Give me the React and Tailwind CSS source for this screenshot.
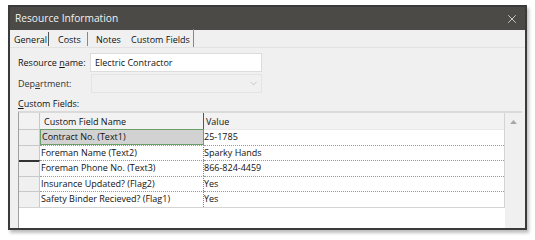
import { X, ChevronDown } from 'lucide-react';

const rows = [
  { name: 'Contract No. (Text1)', value: '25-1785', selected: true },
  { name: 'Foreman Name (Text2)', value: 'Sparky Hands' },
  { name: 'Foreman Phone No. (Text3)', value: '866-824-4459', mark: true },
  { name: 'Insurance Updated? (Flag2)', value: 'Yes' },
  { name: 'Safety Binder Recieved? (Flag1)', value: 'Yes' },
];

const App = () => {
  return (
    <div className="w-[535px] h-[240px] bg-white pt-[5px] pl-[8px] font-['Open_Sans','Noto_Sans',sans-serif] text-[9px] text-[#111] whitespace-nowrap">
      <div className="w-[519px] h-[225px] border-2 border-[#3a3a3a] bg-[#f0f0f0] flex flex-col shadow-[2px_3px_3px_rgba(0,0,0,0.25)]">
        {/* Title bar */}
        <div className="h-[23px] bg-[#4b4a47] flex items-center justify-between pl-[5px] pr-[6px] shrink-0">
          <span className="text-[10.2px] text-[#f2f2f2] leading-none">Resource Information</span>
          <X className="w-[14px] h-[14px] text-[#d8d8d8]" strokeWidth={1.5} />
        </div>

        {/* Tabs */}
        <div className="h-[18px] flex items-end border-b border-[#e2e2e2] shrink-0 leading-none">
          <div className="flex items-center h-[16px]">
            <span className="w-[38px] pl-[4px]">General</span>
            <span className="w-px h-[14px] bg-[#555]" />
            <span className="w-[38px] pl-[9px]">Costs</span>
            <span className="w-px h-[14px] bg-[#888]" />
            <span className="w-[43px] pl-[8px]">Notes</span>
            <span className="w-[62px]">Custom Fields</span>
            <span className="w-px h-[18px] bg-[#888] self-end" />
          </div>
        </div>

        {/* Form */}
        <div className="flex flex-col pl-[8px] pr-[3px] flex-1 min-h-0">
          <div className="flex items-center mt-[5px] h-[19px]">
            <span className="w-[72px]">Resource <span className="underline">n</span>ame:</span>
            <div className="w-[172px] h-[19px] bg-white border border-[#dcdcdc] flex items-center pl-[4px]">
              Electric Contractor
            </div>
          </div>
          <div className="flex items-center mt-[2px] h-[19px]">
            <span className="w-[73px] text-[#333]">Dep<span className="underline">a</span>rtment:</span>
            <div className="w-[171px] h-[19px] bg-[#f0f0f0] border border-[#e4e4e4] flex items-center justify-end pr-[2px]">
              <ChevronDown className="w-[11px] h-[11px] text-[#b5b5b5]" strokeWidth={1.5} />
            </div>
          </div>
          <div className="mt-[4px] h-[14px] leading-[14px]">
            <span className="underline">C</span>ustom Fields:
          </div>

          {/* Grid */}
          <div className="flex flex-1 min-h-0 border-t-2 border-[#dadada] border-l border-l-[#a0a0a0]">
            <div className="flex-1 bg-white">
              <div className="w-[486px] border-r border-b border-[#d4d4d4]">
                <div className="flex h-[16px] leading-[17px] bg-[#f2f2f2]">
                  <div className="w-[21px] border-r border-[#c8c8c8]" />
                  <div className="w-[164px] pl-[4px] border-r border-[#555]">Custom Field Name</div>
                  <div className="flex-1 pl-[2px]">Value</div>
                </div>
                {rows.map((row, i) => (
                  <div key={i} className="flex h-[15.5px] leading-[14px]">
                    <div
                      className={`w-[21px] bg-[#f0f0f0] border-r border-[#c8c8c8] ${
                        row.mark ? 'border-t-2 border-t-[#333]' : 'border-t border-t-[#c8c8c8]'
                      }`}
                    />
                    <div
                      className={`w-[164px] pl-[1px] ${
                        row.selected
                          ? 'bg-[#d2d2d2] border border-[#6a9f6a]'
                          : 'border-t border-r border-dotted border-t-[#999] border-r-[#888]'
                      }`}
                    >
                      {row.name}
                    </div>
                    <div
                      className={`flex-1 ${
                        i > 0 ? 'border-t border-dotted border-t-[#999]' : 'border-t border-t-[#e8e8e8]'
                      }`}
                    >
                      {row.value}
                    </div>
                  </div>
                ))}
              </div>
            </div>
            <div className="w-[17px] bg-[#f0f0f0] flex justify-center pt-[7px]">
              <svg width="7" height="4" viewBox="0 0 7 4">
                <path d="M0 4 L3.5 0 L7 4 Z" fill="#a8a8a8" />
              </svg>
            </div>
          </div>
        </div>
      </div>
    </div>
  );
};

export default App;
